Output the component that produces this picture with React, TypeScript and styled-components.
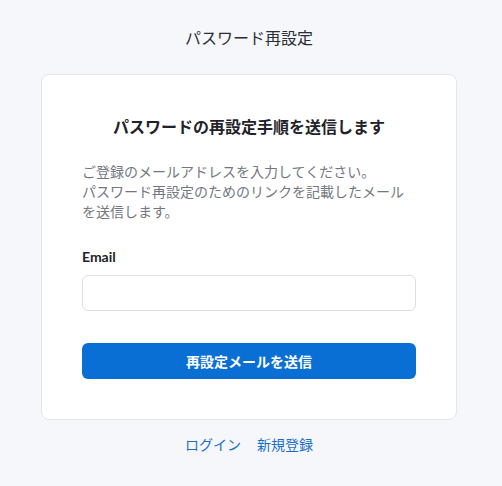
import * as React from 'react';
import styled, { createGlobalStyle } from 'styled-components';

const GlobalStyle = createGlobalStyle`
  html, body {
    margin: 0;
    padding: 0;
    background: #f6f7fb;
  }
  body {
    font-family: Lato, "Noto Sans CJK JP", sans-serif;
    color: #1f2329;
  }
  * {
    box-sizing: border-box;
  }
`;

const Page = styled.div`
  min-height: 486px;
  padding: 28px 45px 0 41px;
  display: flex;
  flex-direction: column;
  align-items: stretch;
`;

const PageTitle = styled.h1`
  margin: 0 0 26px;
  font-size: 16px;
  line-height: 20px;
  font-weight: 400;
  text-align: center;
  color: #2a2e34;
`;

const Card = styled.div`
  background: #ffffff;
  border: 1px solid #e4e6eb;
  border-radius: 8px;
  padding: 41px 40px 40px;
  display: flex;
  flex-direction: column;
`;

const Heading = styled.h2`
  margin: 0 0 24px;
  font-size: 16px;
  line-height: 22px;
  font-weight: 700;
  text-align: center;
  color: #1f2329;
`;

const Description = styled.p`
  margin: 0 0 26px;
  font-size: 14px;
  line-height: 20px;
  color: #737880;
`;

const Label = styled.label`
  display: block;
  margin-bottom: 9px;
  font-size: 14px;
  line-height: 18px;
  font-weight: 700;
  color: #1f2329;
`;

const Input = styled.input`
  display: block;
  width: 100%;
  height: 36px;
  padding: 0 12px;
  border: 1px solid #dcdfe4;
  border-radius: 6px;
  font-family: inherit;
  font-size: 14px;
  background: #fff;
  outline: none;
`;

const SubmitButton = styled.button`
  margin-top: 32px;
  width: 100%;
  height: 36px;
  border: none;
  border-radius: 6px;
  background: #0a6fd5;
  color: #ffffff;
  font-family: inherit;
  font-size: 14px;
  font-weight: 700;
  cursor: pointer;
`;

const Links = styled.nav`
  margin-top: 15px;
  display: flex;
  justify-content: center;
  gap: 16px;
  font-size: 14px;
  line-height: 20px;
`;

const Link = styled.a`
  color: #1c6fc8;
  text-decoration: none;
`;

export default function App(): JSX.Element {
  return (
    <>
      <GlobalStyle />
      <Page>
        <PageTitle>パスワード再設定</PageTitle>
        <Card>
          <Heading>パスワードの再設定手順を送信します</Heading>
          <Description>
            ご登録のメールアドレスを入力してください。
            <br />
            パスワード再設定のためのリンクを記載したメール
            <br />
            を送信します。
          </Description>
          <Label htmlFor="email">Email</Label>
          <Input id="email" type="email" />
          <SubmitButton type="button">再設定メールを送信</SubmitButton>
        </Card>
        <Links>
          <Link href="#">ログイン</Link>
          <Link href="#">新規登録</Link>
        </Links>
      </Page>
    </>
  );
}
